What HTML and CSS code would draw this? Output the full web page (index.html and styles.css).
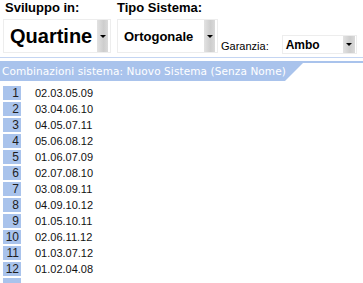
FILE: index.html
```html
<!doctype html>
<html lang="it">
  <head>
    <meta charset="UTF-8" />
    <meta name="viewport" content="width=device-width, initial-scale=1.0" />
    <title>Combinazioni sistema</title>
    <link rel="stylesheet" href="styles.css">
  </head>
  <body>
    <div class="top">
      <div class="field field-sviluppo">
        <div class="label">Sviluppo in:</div>
        <div class="combo combo-big">
          <span class="value">Quartine</span>
          <span class="drop"><span class="arrow"></span></span>
        </div>
      </div>

      <div class="field field-tipo">
        <div class="label">Tipo Sistema:</div>
        <div class="combo combo-mid">
          <span class="value">Ortogonale</span>
          <span class="drop"><span class="arrow"></span></span>
        </div>
      </div>

      <div class="field-garanzia">
        <span class="small-label">Garanzia:</span>
        <div class="combo combo-small">
          <span class="value">Ambo</span>
          <span class="drop"><span class="arrow"></span></span>
        </div>
      </div>
    </div>

    <div class="rule"></div>

    <div class="tab-bar">
      <div class="tab">Combinazioni sistema: Nuovo Sistema (Senza Nome)</div>
    </div>

    <ul class="list">
      <li class="row"><span class="num">1</span><span class="combi">02.03.05.09</span></li>
      <li class="row"><span class="num">2</span><span class="combi">03.04.06.10</span></li>
      <li class="row"><span class="num">3</span><span class="combi">04.05.07.11</span></li>
      <li class="row"><span class="num">4</span><span class="combi">05.06.08.12</span></li>
      <li class="row"><span class="num">5</span><span class="combi">01.06.07.09</span></li>
      <li class="row"><span class="num">6</span><span class="combi">02.07.08.10</span></li>
      <li class="row"><span class="num">7</span><span class="combi">03.08.09.11</span></li>
      <li class="row"><span class="num">8</span><span class="combi">04.09.10.12</span></li>
      <li class="row"><span class="num">9</span><span class="combi">01.05.10.11</span></li>
      <li class="row"><span class="num">10</span><span class="combi">02.06.11.12</span></li>
      <li class="row"><span class="num">11</span><span class="combi">01.03.07.12</span></li>
      <li class="row"><span class="num">12</span><span class="combi">01.02.04.08</span></li>
      <li class="row"><span class="num"></span><span class="combi"></span></li>
    </ul>
  </body>
</html>
```

FILE: styles.css
```css
body {
  margin: 0;
  background-color: #ffffff;
  color: #000000;
  font-family: "Liberation Sans", Arial, sans-serif;
  overflow: hidden;
}

.top {
  display: flex;
  align-items: flex-start;
  height: 57px;
}

.field {
  display: flex;
  flex-direction: column;
}

.field-sviluppo {
  margin-left: 3px;
}

.field-tipo {
  margin-left: 6px;
}

.label {
  font-size: 13px;
  font-weight: bold;
  line-height: 16px;
  margin-left: 2px;
}

.field-tipo .label {
  margin-left: 0;
}

.combo {
  display: flex;
  align-items: stretch;
  border: 1px solid #ededed;
  background-color: #ffffff;
  box-sizing: border-box;
}

.combo .value {
  flex: 1;
  display: flex;
  align-items: center;
  font-weight: bold;
}

.combo-big {
  width: 108px;
  height: 34px;
  margin-top: 3px;
  padding-right: 2px;
}

.combo-big .value {
  font-size: 20px;
  padding-left: 6px;
}

.combo-mid {
  width: 101px;
  height: 34px;
  margin-top: 3px;
  padding-right: 2px;
}

.combo-mid .value {
  font-size: 13px;
  padding-left: 6px;
}

.field-garanzia {
  display: flex;
  align-items: center;
  margin-top: 35px;
  margin-left: 3px;
}

.small-label {
  font-size: 11px;
  padding-top: 3px;
  margin-right: 13px;
}

.combo-small {
  width: 75px;
  height: 19px;
  padding-right: 1px;
}

.combo-small .value {
  font-size: 12px;
  padding-left: 3px;
}

.drop {
  width: 11px;
  display: flex;
  align-items: center;
  justify-content: center;
  background: linear-gradient(to right, #e2e2e2, #cdcdcd 60%, #dadada);
}

.combo-small .drop {
  width: 12px;
}

.arrow {
  width: 0;
  height: 0;
  border-left: 3px solid transparent;
  border-right: 3px solid transparent;
  border-top: 3px solid #000000;
}

.rule {
  height: 1px;
  background-color: #c4d5f2;
}

.tab-bar {
  margin-top: 3px;
  border-top: 2px solid #a9c3ec;
}

.tab {
  width: 303px;
  height: 18px;
  padding-left: 2px;
  box-sizing: border-box;
  background-color: #a9c3ec;
  color: #ffffff;
  font-family: "DejaVu Sans", Verdana, sans-serif;
  font-size: 10.5px;
  line-height: 16px;
  letter-spacing: 0.1px;
  white-space: nowrap;
  clip-path: polygon(0 0, 100% 0, calc(100% - 18px) 100%, 0 100%);
}

.list {
  list-style: none;
  margin: 5px 0 0 0;
  padding: 0;
}

.row {
  display: flex;
  align-items: center;
  height: 14px;
  margin-bottom: 2px;
  font-size: 11px;
}

.num {
  width: 18px;
  height: 14px;
  margin-left: 3px;
  padding-right: 2px;
  box-sizing: border-box;
  background-color: #a9c3ec;
  color: #1e1e1e;
  font-size: 12px;
  text-align: right;
  line-height: 14px;
}

.combi {
  margin-left: 14px;
  color: #111111;
}
```
